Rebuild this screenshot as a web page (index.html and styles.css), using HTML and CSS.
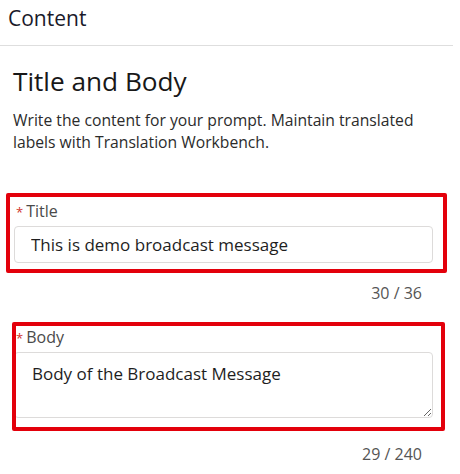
FILE: index.html
```html
<!DOCTYPE html>
<html lang="en">
<head>
<meta charset="utf-8">
<title>Content</title>
<link rel="stylesheet" href="styles.css">
</head>
<body>
<div class="page">
  <header class="header">Content</header>
  <section class="section">
    <h1 class="heading">Title and Body</h1>
    <p class="desc">Write the content for your prompt. Maintain translated labels with Translation Workbench.</p>

    <div class="field field-title">
      <label class="label"><span class="req">*</span>Title</label>
      <input class="input" type="text" value="This is demo broadcast message">
    </div>
    <div class="counter counter-title">30 / 36</div>

    <div class="field field-body">
      <label class="label"><span class="req">*</span>Body</label>
      <textarea class="textarea">Body of the Broadcast Message</textarea>
    </div>
    <div class="counter counter-body">29 / 240</div>
  </section>

  <div class="highlight hl-title"></div>
  <div class="highlight hl-body"></div>
</div>
</body>
</html>
```

FILE: styles.css
```css
* { box-sizing: border-box; }
html, body { margin: 0; padding: 0; background: #fff; }
body {
  font-family: "Open Sans", "Noto Sans", sans-serif;
  color: #181818;
}
.page {
  position: relative;
  width: 453px;
  height: 474px;
  overflow: hidden;
}
.header {
  height: 46px;
  padding: 4px 0 0 8px;
  font-size: 21px;
  line-height: 28px;
  color: #1a1a2a;
  border-bottom: 1px solid #dedede;
}
.section {
  padding: 0 0 0 13px;
}
.heading {
  margin: 18px 0 0 0;
  font-size: 26.2px;
  font-weight: 400;
  line-height: 34px;
  color: #181818;
}
.desc {
  margin: 11px 0 0 0;
  width: 425px;
  font-size: 15.7px;
  line-height: 22px;
  color: #2b2b2b;
}
.field {
  margin-left: 1px;
  width: 419px;
}
.field-title { margin-top: 48px; }
.field-body { margin-top: 24px; }
.label {
  display: block;
  font-size: 16px;
  line-height: 20px;
  color: #4a4a4a;
  margin-bottom: 4px;
}
.req {
  color: #d0342c;
  font-size: 13px;
  margin: 0 3px 0 2px;
}
.input, .textarea {
  display: block;
  width: 419px;
  border: 1px solid #dddbda;
  border-radius: 4px;
  font-family: "Open Sans", "Noto Sans", sans-serif;
  font-size: 17px;
  color: #1e1e1e;
  background: #fff;
  outline: none;
}
.input {
  height: 37px;
  padding: 0 0 0 16px;
}
.textarea {
  height: 66px;
  padding: 10px 17px;
  line-height: 22px;
  resize: vertical;
}
.counter {
  width: 409px;
  text-align: right;
  font-size: 16px;
  line-height: 20px;
  color: #555;
}
.counter-title { margin-top: 20px; }
.counter-body { margin-top: 26px; }
.highlight {
  position: absolute;
  border: 4px solid #e3000b;
  border-radius: 2px;
  pointer-events: none;
}
.hl-title { left: 6px; top: 193px; width: 441px; height: 80px; }
.hl-body { left: 12px; top: 322px; width: 433px; height: 109px; }
```
